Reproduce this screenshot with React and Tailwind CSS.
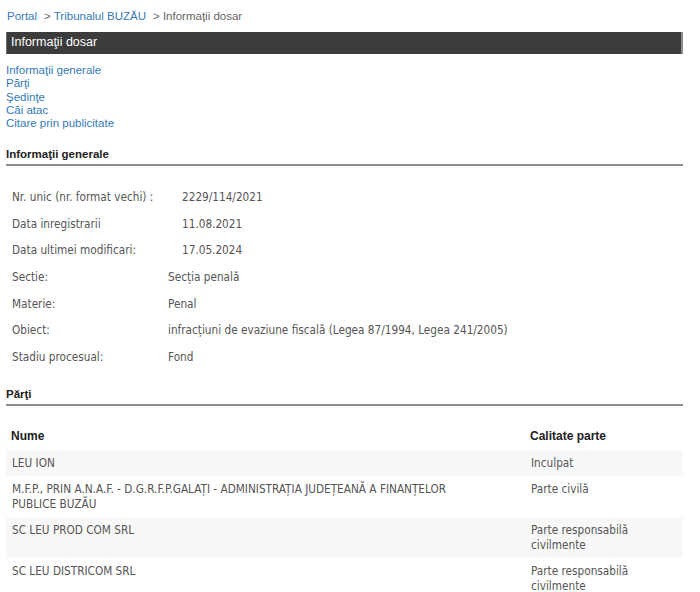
import React from 'react';

// first block uses a wider label column than the second, as in the portal page
const infoTop = [
  ['Nr. unic (nr. format vechi) :', '2229/114/2021'],
  ['Data inregistrarii', '11.08.2021'],
  ['Data ultimei modificari:', '17.05.2024'],
];

const infoBottom = [
  ['Sectie:', 'Secția penală'],
  ['Materie:', 'Penal'],
  ['Obiect:', 'infracțiuni de evaziune fiscală (Legea 87/1994, Legea 241/2005)'],
  ['Stadiu procesual:', 'Fond'],
];

const parti = [
  ['LEU ION', 'Inculpat'],
  ['M.F.P., PRIN A.N.A.F. - D.G.R.F.P.GALAȚI - ADMINISTRAȚIA JUDEȚEANĂ A FINANȚELOR PUBLICE BUZĂU', 'Parte civilă'],
  ['SC LEU PROD COM SRL', 'Parte responsabilă civilmente'],
  ['SC LEU DISTRICOM SRL', 'Parte responsabilă civilmente'],
];

const links = ['Informaţii generale', 'Părţi', 'Şedinţe', 'Căi atac', 'Citare prin publicitate'];

const arial = { fontFamily: '"Liberation Sans", Arial, sans-serif' };
const tahoma = { fontFamily: '"DejaVu Sans Condensed", "DejaVu Sans", sans-serif' };

function SectionTitle({ children }) {
  return (
    <div className="text-[11.5px] font-bold text-[#222] leading-[14px] pb-[3px] border-b-2 border-[#8e8e8e]" style={arial}>
      {children}
    </div>
  );
}

function InfoRows({ rows, labelW }) {
  return (
    <div className="text-[11.7px] text-[#555]" style={tahoma}>
      {rows.map(([k, v]) => (
        <div key={k} className="flex items-center h-[26.67px]">
          <div className={`${labelW} shrink-0 pl-[6px]`}>{k}</div>
          <div>{v}</div>
        </div>
      ))}
    </div>
  );
}

export default function App() {
  return (
    <div className="bg-white min-h-screen pl-[6px] w-[683px]" style={arial}>
      {/* breadcrumb */}
      <div className="pt-[9px] pl-[1px] text-[11.5px] leading-[14px] text-[#666]">
        <span className="text-[#337ab7]">Portal</span>
        <span className="ml-[7px]">&gt; </span>
        <span className="text-[#337ab7]">Tribunalul BUZĂU</span>
        <span className="ml-[7px]">&gt; Informaţii dosar</span>
      </div>

      <div className="mt-[9px] h-[22px] bg-[#3c3c3c] border-l border-[#6a6a6a] border-r-2 border-r-[#8a8a8a] pl-[4px] text-white text-[12.5px] leading-[21px]">
        Informaţii dosar
      </div>

      <div className="mt-[10px] flex flex-col text-[11.5px] leading-[13.3px] text-[#337ab7]">
        {links.map((l) => (
          <span key={l}>{l}</span>
        ))}
      </div>

      <div className="mt-[17px]">
        <SectionTitle>Informaţii generale</SectionTitle>
      </div>

      <div className="mt-[18px]">
        <InfoRows rows={infoTop} labelW="w-[176px]" />
        <InfoRows rows={infoBottom} labelW="w-[162px]" />
      </div>

      <div className="mt-[16px]">
        <SectionTitle>Părţi</SectionTitle>
      </div>

      <table className="mt-[15px] w-full border-collapse text-[11.7px] text-[#555]" style={tahoma}>
        <thead>
          <tr className="h-[29px]">
            <th className="text-left font-bold text-[#222] pl-[5px] text-[12px]" style={arial}>Nume</th>
            <th className="w-[158px] text-left font-bold text-[#222] pl-[5px] text-[12px]" style={arial}>Calitate parte</th>
          </tr>
        </thead>
        <tbody>
          {parti.map(([n, c], i) => (
            <tr key={n} className={i % 2 === 0 ? 'bg-[#f8f8f8]' : 'bg-white'}>
              <td className="pl-[6px] pr-[45px] py-[5.5px] leading-[15px] align-top">{n}</td>
              <td className="pl-[6px] pr-[6px] py-[5.5px] leading-[15px] align-top">{c}</td>
            </tr>
          ))}
        </tbody>
      </table>
    </div>
  );
}
